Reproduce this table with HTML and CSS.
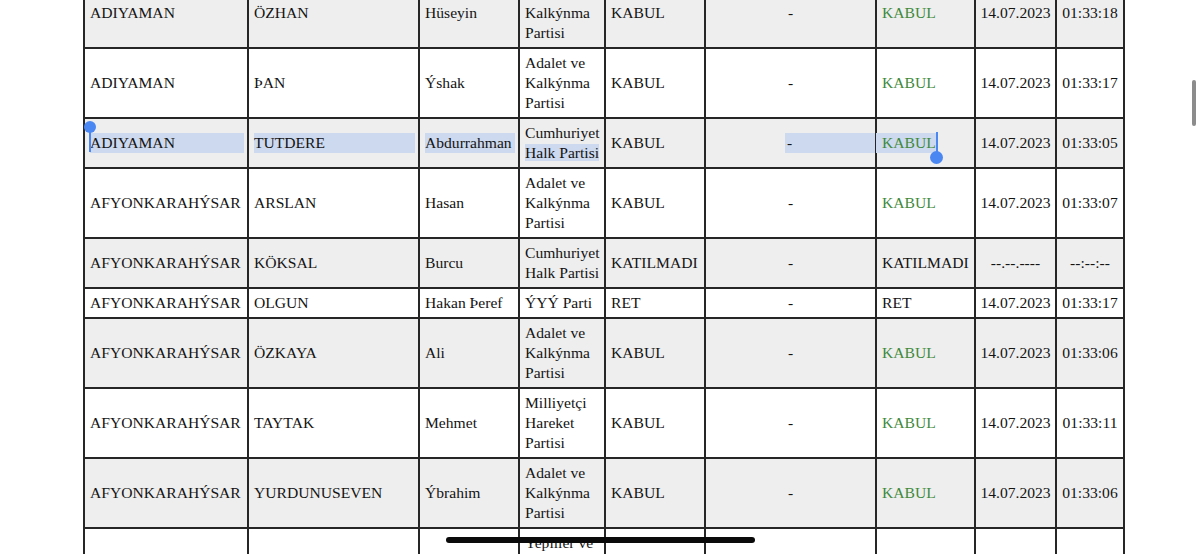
FILE: index.html
```html
<!DOCTYPE html>
<html lang="tr">
<head>
<meta charset="utf-8">
<title>Oylama Sonuçları</title>
<link rel="stylesheet" href="styles.css">
</head>
<body>
<div class="page">
<table class="votes">
<colgroup>
<col class="c1"><col class="c2"><col class="c3"><col class="c4"><col class="c5"><col class="c6"><col class="c7"><col class="c8"><col class="c9">
</colgroup>
<tbody>
<tr class="alt">
<td>ADIYAMAN</td><td>ÖZHAN</td><td>Hüseyin</td><td>Adalet ve<br>Kalkýnma<br>Partisi</td><td>KABUL</td><td class="mid">-</td><td class="ok">KABUL</td><td class="mid">14.07.2023</td><td class="mid">01:33:18</td>
</tr>
<tr>
<td>ADIYAMAN</td><td>ÞAN</td><td>Ýshak</td><td>Adalet ve<br>Kalkýnma<br>Partisi</td><td>KABUL</td><td class="mid">-</td><td class="ok">KABUL</td><td class="mid">14.07.2023</td><td class="mid">01:33:17</td>
</tr>
<tr class="alt">
<td><div class="sel sel-block start">ADIYAMAN</div></td><td><div class="sel sel-block">TUTDERE</div></td><td><div class="sel sel-block">Abdurrahman</div></td><td>Cumhuriyet<br><span class="sel">Halk Partisi</span></td><td>KABUL</td><td><div class="sel sel-tail">-</div></td><td class="ok"><span class="sel sel-head end">KABUL</span></td><td class="mid">14.07.2023</td><td class="mid">01:33:05</td>
</tr>
<tr>
<td>AFYONKARAHÝSAR</td><td>ARSLAN</td><td>Hasan</td><td>Adalet ve<br>Kalkýnma<br>Partisi</td><td>KABUL</td><td class="mid">-</td><td class="ok">KABUL</td><td class="mid">14.07.2023</td><td class="mid">01:33:07</td>
</tr>
<tr class="alt">
<td>AFYONKARAHÝSAR</td><td>KÖKSAL</td><td>Burcu</td><td>Cumhuriyet<br>Halk Partisi</td><td>KATILMADI</td><td class="mid">-</td><td>KATILMADI</td><td class="mid">--.--.----</td><td class="mid">--:--:--</td>
</tr>
<tr>
<td>AFYONKARAHÝSAR</td><td>OLGUN</td><td>Hakan Þeref</td><td>ÝYÝ Parti</td><td>RET</td><td class="mid">-</td><td>RET</td><td class="mid">14.07.2023</td><td class="mid">01:33:17</td>
</tr>
<tr class="alt">
<td>AFYONKARAHÝSAR</td><td>ÖZKAYA</td><td>Ali</td><td>Adalet ve<br>Kalkýnma<br>Partisi</td><td>KABUL</td><td class="mid">-</td><td class="ok">KABUL</td><td class="mid">14.07.2023</td><td class="mid">01:33:06</td>
</tr>
<tr>
<td>AFYONKARAHÝSAR</td><td>TAYTAK</td><td>Mehmet</td><td>Milliyetçi<br>Hareket<br>Partisi</td><td>KABUL</td><td class="mid">-</td><td class="ok">KABUL</td><td class="mid">14.07.2023</td><td class="mid">01:33:11</td>
</tr>
<tr class="alt">
<td>AFYONKARAHÝSAR</td><td>YURDUNUSEVEN</td><td>Ýbrahim</td><td>Adalet ve<br>Kalkýnma<br>Partisi</td><td>KABUL</td><td class="mid">-</td><td class="ok">KABUL</td><td class="mid">14.07.2023</td><td class="mid">01:33:06</td>
</tr>
<tr>
<td>AÐRI</td><td>ÇELEBÝ</td><td>Sırrı Sakık</td><td>Yeþiller ve<br>Sol<br>Gelecek<br>Partisi</td><td>KABUL</td><td class="mid">-</td><td class="ok">KABUL</td><td class="mid">14.07.2023</td><td class="mid">01:33:09</td>
</tr>
</tbody>
</table>
</div>
<div class="scroll-thumb"></div>
<div class="home-indicator"></div>
</body>
</html>
```

FILE: styles.css
```css
html, body {
  margin: 0;
  padding: 0;
  background: #ffffff;
  overflow: hidden;
  height: 554px;
}

.page {
  padding-left: 83px;
}

.votes {
  margin-top: -23px;
  border-collapse: collapse;
  table-layout: fixed;
  width: 1040px;
  font-family: "Liberation Serif", "Times New Roman", serif;
  font-size: 15.6px;
  line-height: 20px;
  color: #141414;
}

.c1 { width: 164px; }
.c2 { width: 171px; }
.c3 { width: 100px; }
.c4 { width: 86px; }
.c5 { width: 100px; }
.c6 { width: 171px; }
.c7 { width: 99px; }
.c8 { width: 81px; }
.c9 { width: 68px; }

.votes td {
  border: 2px solid #262626;
  padding: 4px 4px 4px 5px;
  vertical-align: middle;
  white-space: nowrap;
  overflow: visible;
}

.votes tr.alt td {
  background: #eeeeee;
}

.votes td.mid {
  text-align: center;
  padding-left: 2px;
  padding-right: 2px;
}

.votes td.ok {
  color: #3f8a3b;
}

.sel {
  background: #cdd9ee;
}

.sel-block {
  display: block;
  margin-right: -1px;
}

.sel-tail {
  margin-left: calc(50% - 6px);
  margin-right: -6px;
  padding-left: 2px;
}

.sel-head {
  display: inline-block;
  margin-left: -6px;
  padding-left: 6px;
}

.start, .end {
  position: relative;
}

.start::before {
  content: "";
  position: absolute;
  left: -1px;
  top: -6px;
  width: 2px;
  height: 25px;
  background: #4a87f2;
}

.start::after {
  content: "";
  position: absolute;
  left: -6px;
  top: -12px;
  width: 12px;
  height: 12px;
  border-radius: 50%;
  background: #4a87f2;
}

.end::before {
  content: "";
  position: absolute;
  right: -2px;
  top: -1px;
  width: 2px;
  height: 21px;
  background: #4a87f2;
}

.end::after {
  content: "";
  position: absolute;
  right: -7px;
  top: 18px;
  width: 13px;
  height: 13px;
  border-radius: 50%;
  background: #4a87f2;
}

.scroll-thumb {
  position: fixed;
  top: 80px;
  right: 4px;
  width: 4px;
  height: 46px;
  border-radius: 2px;
  background: #8c8c8c;
}

.home-indicator {
  position: fixed;
  left: 446px;
  top: 537px;
  width: 309px;
  height: 6px;
  border-radius: 3px;
  background: #0a0a0a;
}
```
